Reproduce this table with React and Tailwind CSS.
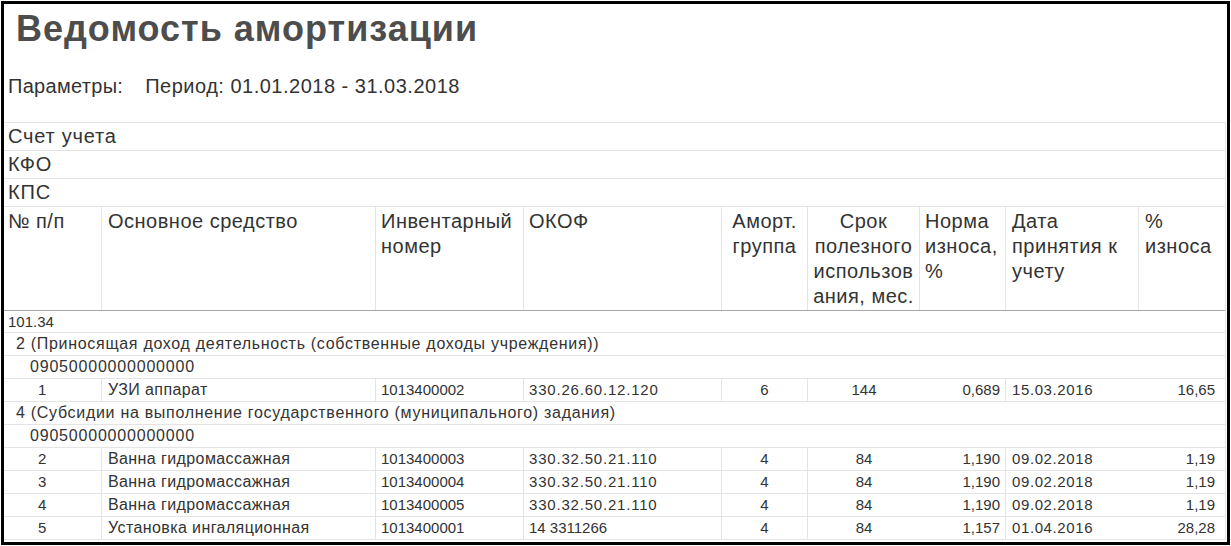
const cols = 'grid grid-cols-[98px_274px_148px_198px_86px_112px_86px_133px_87px]';

const items = [
  { group: 'g2' },
  { code: true },
  { n: '1', name: 'УЗИ аппарат', inv: '1013400002', okof: '330.26.60.12.120', grp: '6', srok: '144', norma: '0,689', date: '15.03.2016', pct: '16,65' },
  { group: 'g4' },
  { code: true },
  { n: '2', name: 'Ванна гидромассажная', inv: '1013400003', okof: '330.32.50.21.110', grp: '4', srok: '84', norma: '1,190', date: '09.02.2018', pct: '1,19' },
  { n: '3', name: 'Ванна гидромассажная', inv: '1013400004', okof: '330.32.50.21.110', grp: '4', srok: '84', norma: '1,190', date: '09.02.2018', pct: '1,19' },
  { n: '4', name: 'Ванна гидромассажная', inv: '1013400005', okof: '330.32.50.21.110', grp: '4', srok: '84', norma: '1,190', date: '09.02.2018', pct: '1,19' },
  { n: '5', name: 'Установка ингаляционная', inv: '1013400001', okof: '14 3311266', grp: '4', srok: '84', norma: '1,157', date: '01.04.2016', pct: '28,28' },
];

const groupNames = {
  g2: '2 (Приносящая доход деятельность (собственные доходы учреждения))',
  g4: '4 (Субсидии на выполнение государственного (муниципального) задания)',
};

function HeaderCell({ children, className = '' }) {
  return <div className={`border-r border-[#e4e4e4] pt-[2px] leading-[25px] ${className}`}>{children}</div>;
}

function DataRow({ r }) {
  // dotted OKOF codes render noticeably wider in the source report
  const okofSpacing = r.okof.includes('.') ? 'tracking-[0.8px]' : '';
  return (
    <div className={`${cols} h-[23px] border-b border-[#e4e4e4] leading-[22px] text-[15px]`}>
      <div className="border-r border-[#e4e4e4] pl-[34px]">{r.n}</div>
      <div className="border-r border-[#e4e4e4] pl-[6px] text-[16px] tracking-[0.4px]">{r.name}</div>
      <div className="border-r border-[#e4e4e4] pl-[5px]">{r.inv}</div>
      <div className={`border-r border-[#e4e4e4] pl-[5px] ${okofSpacing}`}>{r.okof}</div>
      <div className="border-r border-[#e4e4e4] text-center">{r.grp}</div>
      <div className="text-center">{r.srok}</div>
      <div className="border-r border-[#e4e4e4] text-right pr-[5px]">{r.norma}</div>
      <div className="pl-[6px] tracking-[0.6px]">{r.date}</div>
      <div className="border-r border-[#e4e4e4] text-right pr-[10px]">{r.pct}</div>
    </div>
  );
}

export default function App() {
  return (
    <div className="bg-white w-[1231px] h-[546px] pl-px pt-px font-['Liberation_Sans',Arial,sans-serif] text-[#333]">
      <div className="w-[1229px] h-[544px] border-[3px] border-black flex flex-col overflow-hidden">
        <div className="h-[50px] pl-[12px] text-[36px] tracking-[1px] leading-[50px] font-bold text-[#4d4d4d]">
          Ведомость амортизации
        </div>
        <div className="h-[68px] pt-[20px] pl-[4px] text-[20px] leading-[25px] flex">
          <span className="tracking-[0.3px]">Параметры:</span>
          <span className="ml-[22px] tracking-[0.5px]">Период: 01.01.2018 - 31.03.2018</span>
        </div>

        <div className="border-r border-[#e4e4e4] w-[1222px]">
          {['Счет учета', 'КФО', 'КПС'].map((t) => (
            <div key={t} className="h-[28px] border-t border-[#e4e4e4] pl-[4px] text-[20px] tracking-[0.8px] leading-[27px]">
              {t}
            </div>
          ))}

          <div className={`${cols} h-[105px] border-t border-b border-t-[#e4e4e4] border-b-[#a6a6a6] text-[20px] tracking-[0.5px]`}>
            <HeaderCell className="pl-[4px]">№ п/п</HeaderCell>
            <HeaderCell className="pl-[6px]">Основное средство</HeaderCell>
            <HeaderCell className="pl-[5px]">Инвентарный<br />номер</HeaderCell>
            <HeaderCell className="pl-[5px]">ОКОФ</HeaderCell>
            <HeaderCell className="text-center">Аморт.<br />группа</HeaderCell>
            <HeaderCell className="text-center">Срок<br />полезного<br />использов<br />ания, мес.</HeaderCell>
            <HeaderCell className="pl-[5px]">Норма<br />износа,<br />%</HeaderCell>
            <HeaderCell className="pl-[6px]">Дата<br />принятия к<br />учету</HeaderCell>
            <HeaderCell className="pl-[6px]">%<br />износа</HeaderCell>
          </div>

          <div className="h-[22px] border-b border-[#e4e4e4] pl-[4px] text-[15px] leading-[21px]">101.34</div>
          {items.map((r, i) => {
            if (r.group) {
              return (
                <div key={i} className="h-[23px] border-b border-[#e4e4e4] pl-[12px] text-[16px] tracking-[0.7px] leading-[22px]">
                  {groupNames[r.group]}
                </div>
              );
            }
            if (r.code) {
              return (
                <div key={i} className="h-[23px] border-b border-[#e4e4e4] pl-[26px] text-[16px] tracking-[0.8px] leading-[22px]">
                  09050000000000000
                </div>
              );
            }
            return <DataRow key={i} r={r} />;
          })}
        </div>
      </div>
    </div>
  );
}
